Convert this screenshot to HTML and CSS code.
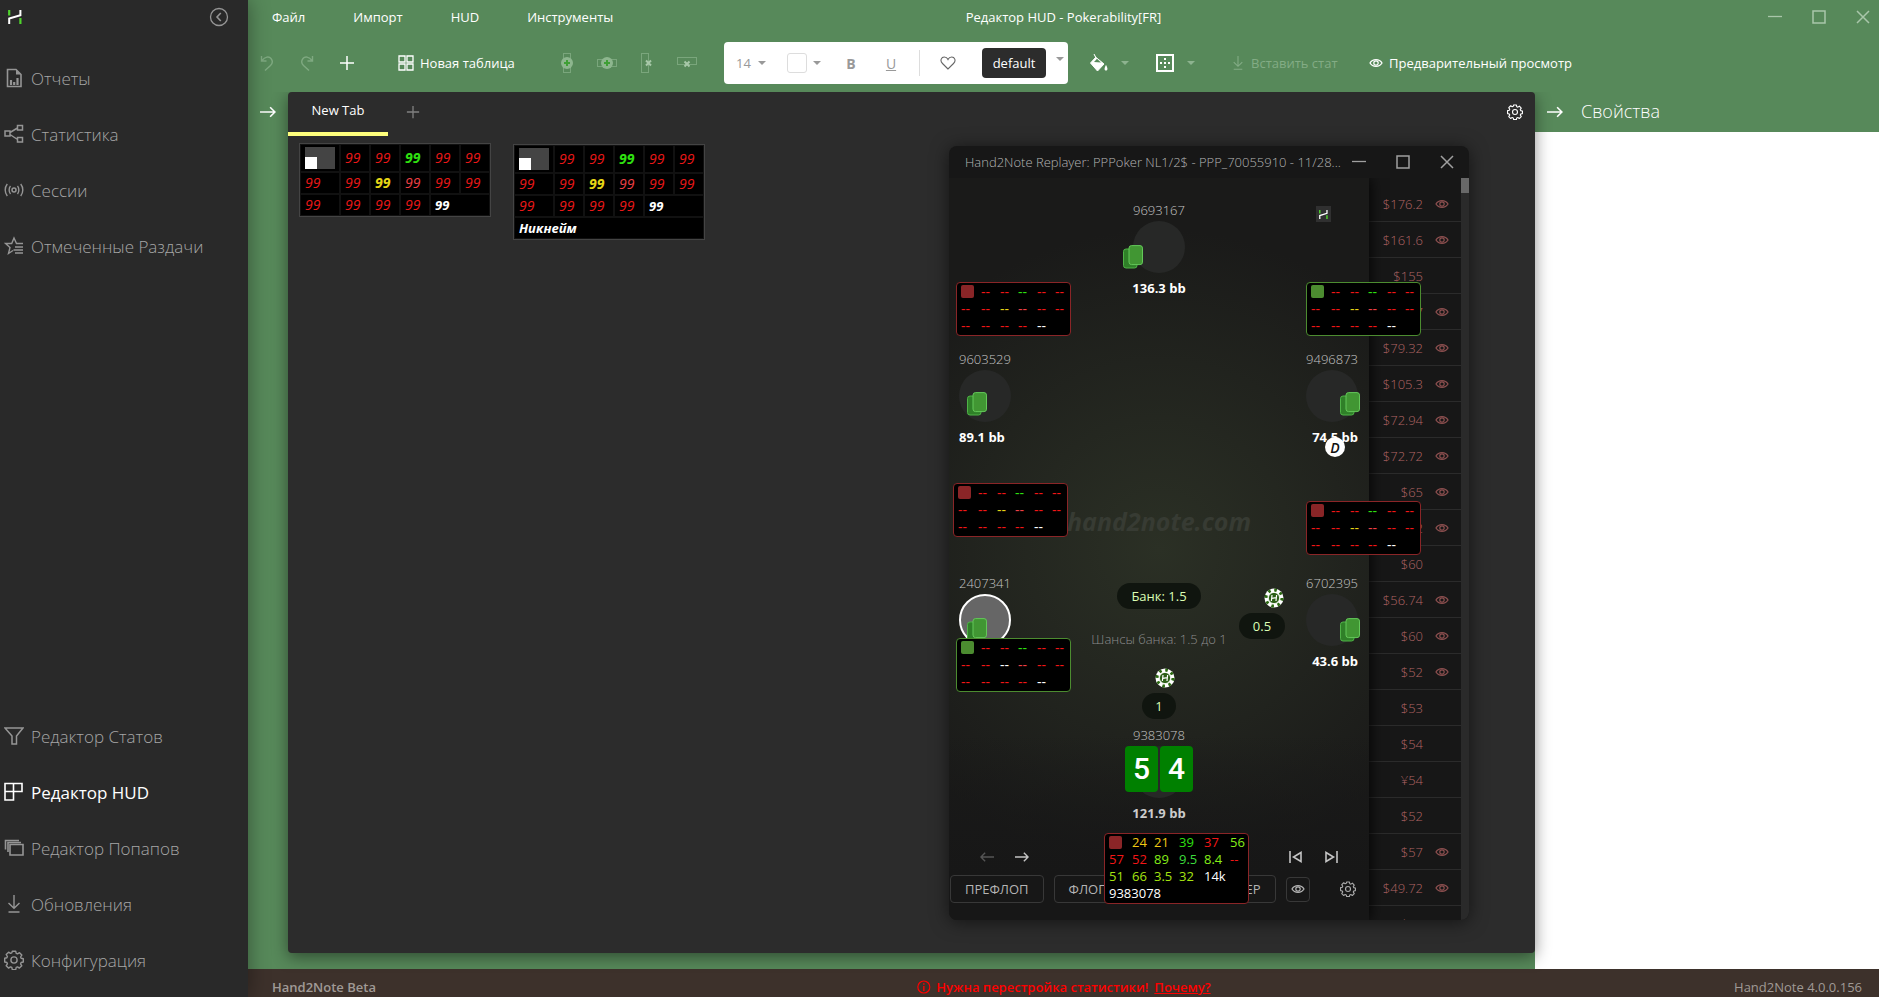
FILE: index.html
```html
<!DOCTYPE html>
<html lang="ru">
<head>
<meta charset="utf-8">
<title>Редактор HUD - Pokerability[FR]</title>
<link rel="stylesheet" href="styles.css">
</head>
<body>
<svg class="defs" aria-hidden="true">
  <symbol id="logo" viewBox="0 0 14 14"><path d="M1.2 14V8.6L12.4 5.2V0" fill="none" stroke="#fff" stroke-width="2"/><path d="M1.2 0V5.6M12.4 8V14" stroke="#4fd42c" stroke-width="2.2"/></symbol>
  <symbol id="eye" viewBox="0 0 14 10"><path d="M1 5C3.600 .6 10.400 .6 13 5C10.400 9.400 3.600 9.400 1 5Z" fill="none" stroke="currentColor" stroke-width="1.300"/><circle cx="7" cy="5" r="2.200" fill="none" stroke="currentColor" stroke-width="1.200"/></symbol>
  <symbol id="gear" viewBox="0 0 20 20"><path d="M8.300 1.200h3.400l.5 2.200 1.300.5 2-1.200 2.300 2.400-1.200 1.900.5 1.300 2.200.5v3.200l-2.200.5-.5 1.300 1.200 2-2.400 2.300-1.900-1.200-1.300.5-.5 2.200H8.300l-.5-2.200-1.300-.5-2 1.200-2.300-2.400 1.200-1.900-.5-1.300-2.200-.5V8.300l2.200-.5.5-1.300-1.200-2 2.400-2.300 1.900 1.200 1.300-.5Z" fill="none" stroke="currentColor" stroke-width="1.400" stroke-linejoin="round"/><circle cx="10" cy="10" r="3.100" fill="none" stroke="currentColor" stroke-width="1.400"/></symbol>
  <symbol id="arrow" viewBox="0 0 15 12"><path d="M0 6H14M9.500 1.500L14 6L9.500 10.500" fill="none" stroke="currentColor" stroke-width="1.500"/></symbol>
  <symbol id="download" viewBox="0 0 14 18"><path d="M7 0V13M1.500 8L7 13.300L12.500 8M1.500 17H12.500" fill="none" stroke="currentColor" stroke-width="1.400"/></symbol>
  <symbol id="caret" viewBox="0 0 8 4"><path d="M0 0H8L4 4Z" fill="currentColor"/></symbol>
  <symbol id="plus" viewBox="0 0 16 16"><path d="M8 1V15M1 8H15" stroke="currentColor" stroke-width="1.500"/></symbol>
  <symbol id="undo" viewBox="0 0 14 16"><path d="M1.500 1V6H6.500M2 5.500C5 1.500 9 1 11 3.500C13 6 12.500 8.500 10.500 10.500L5 15.500" fill="none" stroke="currentColor" stroke-width="1.400"/></symbol>
  <symbol id="min" viewBox="0 0 14 14"><path d="M0 6.500H14" stroke="currentColor" stroke-width="1.300"/></symbol>
  <symbol id="max" viewBox="0 0 14 14"><path d="M1 1H13V13H1Z" fill="none" stroke="currentColor" stroke-width="1.500"/></symbol>
  <symbol id="close" viewBox="0 0 14 14"><path d="M1 1L13 13M13 1L1 13" stroke="currentColor" stroke-width="1.500"/></symbol>
  <symbol id="backs" viewBox="0 0 20 24"><rect x=".5" y="4" width="13.500" height="19" rx="2.500" fill="#2f8028" stroke="#4fb247"/><rect x="6" y=".6" width="13.500" height="19" rx="2.500" fill="#419633" stroke="#64c85a"/></symbol>
  <symbol id="chip" viewBox="0 0 20 20"><circle cx="10" cy="10" r="9.500" fill="#fff"/><circle cx="10" cy="10" r="8" fill="none" stroke="#2c6a12" stroke-width="3" stroke-dasharray="2.600 3.680"/><circle cx="10" cy="10" r="5.600" fill="#2c5f17" stroke="#fff" stroke-width=".8"/><path d="M8 7L7.400 13M12.600 7L12 13M7.800 10.400L12.400 9.600" stroke="#fff" stroke-width="1.200"/></symbol>
  <symbol id="skip" viewBox="0 0 14 14"><path d="M1 1V13M12 2.500V11.500L4.500 7Z" fill="none" stroke="currentColor" stroke-width="1.600"/></symbol>
</svg>
<div class="app">
  <aside class="sidebar">
    <header class="brand">
      <svg class="i14"><use href="#logo"/></svg>
      <button class="icon-btn collapse" aria-label="Свернуть"><svg class="i20" viewBox="0 0 20 20"><circle cx="10" cy="10" r="8.500" fill="none" stroke="currentColor" stroke-width="1.300"/><path d="M11.800 6L8 10L11.800 14" fill="none" stroke="currentColor" stroke-width="1.600"/></svg></button>
    </header>
    <nav class="nav">
      <a href="#"><svg class="i20" viewBox="0 0 20 20"><path d="M3.500 1.500H12L17 6.500V18.500H3.500Z" fill="none" stroke="currentColor" stroke-width="1.600"/><path d="M12 1.500V6.500H17Z" fill="currentColor"/><path d="M7 17V12M10.200 17V14M13.500 17V10" stroke="currentColor" stroke-width="2.200"/></svg><span>Отчеты</span></a>
      <a href="#"><svg class="i20" viewBox="0 0 20 20"><path d="M1 7H6V12H1ZM13.500 1.500H18.500V6H13.500ZM13.500 13.500H18.500V18H13.500ZM6 8.500L13.500 4M6 10.500L13.500 15.500" fill="none" stroke="currentColor" stroke-width="1.500"/></svg><span>Статистика</span></a>
      <a href="#"><svg class="i20" viewBox="0 0 20 20"><circle cx="10" cy="10" r="2" fill="none" stroke="currentColor" stroke-width="1.500"/><path d="M6.500 6C4.700 8 4.700 12 6.500 14M3.300 4C.5 7.500 .5 12.500 3.300 16M13.500 6C15.300 8 15.300 12 13.500 14M16.700 4C19.500 7.500 19.500 12.500 16.700 16" fill="none" stroke="currentColor" stroke-width="1.400"/></svg><span>Сессии</span></a>
      <a href="#"><svg class="i20" viewBox="0 0 20 20"><path d="M19 7.500H12.500L10 2L7.700 7.500H1.500L6 11.500L4.500 17.500L9 14.500M11 11H19M9.500 14H19M11 17H19" fill="none" stroke="currentColor" stroke-width="1.400"/></svg><span>Отмеченные Раздачи</span></a>
    </nav>
    <nav class="nav nav-bottom">
      <a href="#"><svg class="i20" viewBox="0 0 20 20"><path d="M1 2H19L12.500 10V18H8V10Z" fill="none" stroke="currentColor" stroke-width="1.500"/></svg><span>Редактор Статов</span></a>
      <a href="#" class="active" aria-current="page"><svg class="i20" viewBox="0 0 20 20"><path d="M1 1.500H18V9.500H1ZM9.500 1.500V18H1V9.500" fill="none" stroke="currentColor" stroke-width="1.600"/></svg><span>Редактор HUD</span></a>
      <a href="#"><svg class="i20" viewBox="0 0 20 20"><path d="M6 6.500H19V17H6ZM4 14V4.500H17M1.500 11.500V2.500H15" fill="none" stroke="currentColor" stroke-width="1.600"/></svg><span>Редактор Попапов</span></a>
      <a href="#"><svg class="i20" viewBox="-3 -1 20 20"><use href="#download" width="14" height="18"/></svg><span>Обновления</span></a>
      <a href="#"><svg class="i20"><use href="#gear"/></svg><span>Конфигурация</span></a>
    </nav>
  </aside>
  <main class="main">
    <header class="titlebar">
      <nav class="menu"><button>Файл</button><button>Импорт</button><button>HUD</button><button>Инструменты</button></nav>
      <h1 class="title">Редактор HUD - Pokerability[FR]</h1>
      <div class="win-ctl">
        <button class="icon-btn" aria-label="Свернуть окно"><svg class="i14"><use href="#min"/></svg></button>
        <button class="icon-btn" aria-label="Развернуть"><svg class="i14"><use href="#max"/></svg></button>
        <button class="icon-btn" aria-label="Закрыть"><svg class="i14"><use href="#close"/></svg></button>
      </div>
    </header>
    <div class="toolbar">
      <div class="history">
        <button class="icon-btn dim" aria-label="Отменить"><svg class="i16"><use href="#undo"/></svg></button>
        <button class="icon-btn dim flip" aria-label="Повторить"><svg class="i16"><use href="#undo"/></svg></button>
        <button class="icon-btn" aria-label="Добавить"><svg class="i16"><use href="#plus"/></svg></button>
      </div>
      <button class="tool new-table"><svg class="i16" viewBox="0 0 16 16"><path d="M1 1H7V7H1ZM9 1H15V7H9ZM1 9H7V15H1ZM9 9H15V15H9Z" fill="none" stroke="currentColor" stroke-width="1.300"/></svg>Новая таблица</button>
      <div class="cells">
        <button class="icon-btn" aria-label="Добавить столбец"><svg class="i20" viewBox="0 0 20 20"><rect x="6.500" y=".5" width="7" height="19" fill="none" stroke="#7aa67c"/><circle cx="10" cy="10" r="6" fill="#8db68e"/><path d="M10 7V13M7 10H13" stroke="#3f9f35" stroke-width="2"/></svg></button>
        <button class="icon-btn" aria-label="Добавить строку"><svg class="i20" viewBox="0 0 20 20"><rect x=".5" y="6.500" width="19" height="7" fill="none" stroke="#7aa67c"/><circle cx="10" cy="10" r="6" fill="#8db68e"/><path d="M10 7V13M7 10H13" stroke="#3f9f35" stroke-width="2"/></svg></button>
        <button class="icon-btn" aria-label="Удалить столбец"><svg class="i20" viewBox="0 0 20 20"><rect x="4.500" y=".5" width="7" height="19" fill="none" stroke="#7aa67c"/><path d="M9 7.500L14 12.500M14 7.500L9 12.500" stroke="#a8c8a9" stroke-width="2"/></svg></button>
        <button class="icon-btn" aria-label="Удалить строку"><svg class="i20" viewBox="0 0 20 20"><rect x=".5" y="4.500" width="19" height="7" fill="none" stroke="#7aa67c"/><path d="M7.500 8.500L12.500 13.500M12.500 8.500L7.500 13.500" stroke="#a8c8a9" stroke-width="2"/></svg></button>
      </div>
      <div class="format">
        <div class="pick"><select aria-label="Размер шрифта"><option>14</option></select><svg class="caret"><use href="#caret"/></svg></div>
        <button class="swatch" aria-label="Цвет текста"><span></span><svg class="caret"><use href="#caret"/></svg></button>
        <button class="fmt b">B</button>
        <button class="fmt u">U</button>
        <i class="rule"></i>
        <button class="icon-btn heart" aria-label="Избранное"><svg class="i16" viewBox="0 0 16 16"><path d="M8 14L2.500 8.500C-.5 5.500 1.500 2 4.300 2C6 2 7.300 3 8 4.500C8.700 3 10 2 11.700 2C14.500 2 16.500 5.500 13.500 8.500Z" fill="none" stroke="currentColor" stroke-width="1.100"/></svg></button>
        <button class="default">default</button>
        <button class="icon-btn more" aria-label="Стили"><svg class="caret"><use href="#caret"/></svg></button>
      </div>
      <button class="icon-btn drop" aria-label="Заливка"><svg class="i20" viewBox="0 0 20 20"><path d="M5 1L6.500 4L15 11L8.500 18L1.500 10L7 4" fill="currentColor" stroke="currentColor"/><path d="M5 9L8 5.800L12 9.500Z" fill="#57895a"/><path d="M17 12C15.200 15 15 17.500 17 17.500S18.800 15 17 12Z" fill="currentColor"/></svg><svg class="caret"><use href="#caret"/></svg></button>
      <button class="icon-btn drop borders" aria-label="Границы"><svg class="i20" viewBox="0 0 20 20"><rect x="2" y="2" width="16" height="16" fill="none" stroke="currentColor" stroke-width="2"/><path d="M10 5V15M5 10H15" stroke="currentColor" stroke-width="2" stroke-dasharray="2 2"/></svg><svg class="caret"><use href="#caret"/></svg></button>
      <button class="tool insert" disabled><svg class="i14"><use href="#download"/></svg>Вставить стат</button>
      <button class="tool preview"><svg class="i14"><use href="#eye"/></svg>Предварительный просмотр</button>
    </div>
    <div class="work">
      <button class="icon-btn gutter" aria-label="Показать панель"><svg class="i15"><use href="#arrow"/></svg></button>
      <section class="panel">
        <div class="tabs">
          <button class="tab">New Tab</button>
          <button class="icon-btn add-tab" aria-label="Новая вкладка"><svg class="i14"><use href="#plus"/></svg></button>
          <button class="icon-btn settings" aria-label="Настройки"><svg class="i16"><use href="#gear"/></svg></button>
        </div>
        <div class="canvas">
          <table class="hud-edit first">
            <tr class="tall"><td class="wide"><span class="note"></span></td><td>99</td><td>99</td><td class="g">99</td><td>99</td><td>99</td></tr>
            <tr><td>99</td><td>99</td><td class="y">99</td><td class="p">99</td><td>99</td><td>99</td></tr>
            <tr><td>99</td><td>99</td><td>99</td><td>99</td><td colspan="2" class="w">99</td></tr>
          </table>
          <table class="hud-edit second">
            <tr class="tall"><td class="wide"><span class="note"></span></td><td>99</td><td>99</td><td class="g">99</td><td>99</td><td>99</td></tr>
            <tr><td>99</td><td>99</td><td class="y">99</td><td class="p">99</td><td>99</td><td>99</td></tr>
            <tr><td>99</td><td>99</td><td>99</td><td>99</td><td colspan="2" class="w">99</td></tr>
            <tr><td colspan="6" class="w">Никнейм</td></tr>
          </table>
          <section class="replayer">
            <header class="rep-title">
              <h2>Hand2Note Replayer: PPPoker NL1/2$ - PPP_70055910 - 11/28...</h2>
              <button class="icon-btn" aria-label="Свернуть"><svg class="i14"><use href="#min"/></svg></button>
              <button class="icon-btn" aria-label="Развернуть"><svg class="i14"><use href="#max"/></svg></button>
              <button class="icon-btn" aria-label="Закрыть"><svg class="i14"><use href="#close"/></svg></button>
            </header>
            <div class="rep-body">
              <div class="felt">
                <span class="badge"><svg><use href="#logo"/></svg></span>
                <b class="mark">hand2note.com</b>
                <div class="seat s1"><span>9693167</span><i></i><b>136.3 bb</b><svg class="backs"><use href="#backs"/></svg></div>
                <div class="seat s2"><span>9603529</span><i></i><b>89.1 bb</b><svg class="backs"><use href="#backs"/></svg></div>
                <div class="seat s3"><span>9496873</span><i></i><b>74.5 bb</b><svg class="backs"><use href="#backs"/></svg></div>
                <div class="seat s4 turn"><span>2407341</span><i></i><svg class="backs"><use href="#backs"/></svg></div>
                <div class="seat s5"><span>6702395</span><i></i><b>43.6 bb</b><svg class="backs"><use href="#backs"/></svg></div>
                <div class="seat s6"><span>9383078</span><i></i><b>121.9 bb</b><div class="cards"><em>5</em><em>4</em></div></div>
                <span class="dealer">D</span>
                <span class="pill bank">Банк: 1.5</span>
                <span class="odds">Шансы банка: 1.5 до 1</span>
                <svg class="chip c1"><use href="#chip"/></svg><span class="pill bet1">0.5</span>
                <svg class="chip c2"><use href="#chip"/></svg><span class="pill bet2">1</span>
                <footer class="controls">
                  <div class="steps">
                    <button class="icon-btn faint" aria-label="Назад"><svg class="i14"><use href="#arrow"/></svg></button>
                    <button class="icon-btn" aria-label="Вперёд"><svg class="i14"><use href="#arrow"/></svg></button>
                    <button class="icon-btn prev" aria-label="Предыдущая раздача"><svg class="i14"><use href="#skip"/></svg></button>
                    <button class="icon-btn flip" aria-label="Следующая раздача"><svg class="i14"><use href="#skip"/></svg></button>
                  </div>
                  <div class="streets">
                    <button>ПРЕФЛОП</button><button>ФЛОП</button><button>ТЕРН</button><button>РИВЕР</button>
                    <button class="look" aria-label="Показать карты"><svg class="i14"><use href="#eye"/></svg></button>
                    <button class="icon-btn cfg" aria-label="Настройки"><svg class="i16"><use href="#gear"/></svg></button>
                  </div>
                </footer>
              </div>
              <ul class="hands">
                <li>$176.2<svg><use href="#eye"/></svg></li><li>$161.6<svg><use href="#eye"/></svg></li><li>$155</li><li>$83.67<svg><use href="#eye"/></svg></li><li>$79.32<svg><use href="#eye"/></svg></li><li>$105.3<svg><use href="#eye"/></svg></li><li>$72.94<svg><use href="#eye"/></svg></li><li>$72.72<svg><use href="#eye"/></svg></li><li>$65<svg><use href="#eye"/></svg></li><li>$62.2<svg><use href="#eye"/></svg></li><li>$60</li><li>$56.74<svg><use href="#eye"/></svg></li><li>$60<svg><use href="#eye"/></svg></li><li>$52<svg><use href="#eye"/></svg></li><li>$53</li><li>$54</li><li>¥54</li><li>$52</li><li>$57<svg><use href="#eye"/></svg></li><li>$49.72<svg><use href="#eye"/></svg></li><li>$48</li>
              </ul>
              <div class="scroll"><i></i></div>
            </div>
            <div class="hud h1"><i></i><span>--</span><span>--</span><span class="g">--</span><span>--</span><span>--</span><span>--</span><span>--</span><span class="y">--</span><span class="p">--</span><span>--</span><span>--</span><span>--</span><span>--</span><span>--</span><span>--</span><span class="w">--</span></div>
            <div class="hud h2 green"><i></i><span>--</span><span>--</span><span class="g">--</span><span>--</span><span>--</span><span>--</span><span>--</span><span class="y">--</span><span class="p">--</span><span>--</span><span>--</span><span>--</span><span>--</span><span>--</span><span>--</span><span class="w">--</span></div>
            <div class="hud h3"><i></i><span>--</span><span>--</span><span class="g">--</span><span>--</span><span>--</span><span>--</span><span>--</span><span class="y">--</span><span class="p">--</span><span>--</span><span>--</span><span>--</span><span>--</span><span>--</span><span>--</span><span class="w">--</span></div>
            <div class="hud h4"><i></i><span>--</span><span>--</span><span class="g">--</span><span>--</span><span>--</span><span>--</span><span>--</span><span class="y">--</span><span class="p">--</span><span>--</span><span>--</span><span>--</span><span>--</span><span>--</span><span>--</span><span class="w">--</span></div>
            <div class="hud h5 green"><i></i><span>--</span><span>--</span><span class="g">--</span><span>--</span><span>--</span><span>--</span><span>--</span><span class="w">--</span><span class="p">--</span><span>--</span><span>--</span><span>--</span><span>--</span><span>--</span><span>--</span><span class="w">--</span></div>
            <div class="hud h6"><i></i><span class="o">24</span><span class="o">21</span><span class="g">39</span><span>37</span><span class="l">56</span><span>57</span><span>52</span><span class="l">89</span><span class="m">9.5</span><span class="l">8.4</span><span>--</span><span class="l2">51</span><span class="l2">66</span><span class="l2">3.5</span><span class="l2">32</span><span class="w">14k</span><span class="nick">9383078</span></div>
          </section>
        </div>
      </section>
      <aside class="props">
        <header><button class="icon-btn" aria-label="Скрыть панель"><svg class="i15"><use href="#arrow"/></svg></button><h2>Свойства</h2></header>
        <div class="props-body"></div>
      </aside>
    </div>
    <footer class="status">
      <span class="beta">Hand2Note Beta</span>
      <span class="alert"><svg class="i14" viewBox="0 0 14 14"><circle cx="7" cy="7" r="6" fill="none" stroke="currentColor" stroke-width="1.200"/><path d="M7 3.200V4.800M7 6V11" stroke="currentColor" stroke-width="1.400"/></svg>Нужна перестройка статистики! <a href="#">Почему?</a></span>
      <span class="version">Hand2Note 4.0.0.156</span>
    </footer>
  </main>
</div>
</body>
</html>
```
FILE: styles.css
```css
* { box-sizing: border-box; }
body { margin: 0; font-family: "Open Sans", "Noto Sans", sans-serif; font-size: 13px; color: #fff; }
button, select { font: inherit; color: inherit; background: none; border: 0; padding: 0; margin: 0; }
h1, h2 { margin: 0; font-weight: 400; }
svg { display: block; flex: none; }
.defs { position: absolute; width: 0; height: 0; }
.i14 { width: 14px; height: 14px; }
.i15 { width: 16px; height: 14px; }
.i16 { width: 16px; height: 16px; }
.i20 { width: 20px; height: 20px; }
.caret { width: 8px; height: 4px; }
.icon-btn { display: flex; align-items: center; justify-content: center; }
.flip { transform: scaleX(-1); }

.app { display: flex; height: 100vh; overflow: hidden; }
.sidebar { flex: 0 0 248px; display: flex; flex-direction: column; background: #292929; color: #959595; padding-bottom: 9px; position: relative; z-index: 2; box-shadow: 0 0 20px rgba(0, 0, 0, .4); }
.brand { display: flex; align-items: center; justify-content: space-between; height: 34px; padding: 0 19px 0 8px; margin-bottom: 16px; }
.nav a { display: flex; align-items: center; gap: 7px; height: 56px; padding-left: 4px; font-size: 17px; font-weight: 300; color: inherit; text-decoration: none; white-space: nowrap; }
.nav span { color: #a6a6a6; }
.nav .active, .nav .active span { color: #fff; font-weight: 400; }
.nav-bottom { margin-top: auto; }

.main { flex: 1; min-width: 0; display: flex; flex-direction: column; background: #57895a; }
.titlebar { position: relative; flex: none; display: flex; align-items: center; justify-content: space-between; height: 34px; padding: 0 9px 0 24px; font-weight: 500; }
.menu { display: flex; gap: 48px; }
.title { position: absolute; left: 50%; transform: translateX(-50%); font-size: 13px; font-weight: 500; white-space: nowrap; line-height: 34px; }
.win-ctl { display: flex; gap: 30px; color: #a9c6aa; }

.toolbar { flex: none; display: flex; align-items: center; height: 58px; padding-left: 11px; font-weight: 600; white-space: nowrap; }
.history { display: flex; gap: 24px; }
.dim { color: #7fa981; }
.tool { display: flex; align-items: center; gap: 6px; }
.new-table { margin-left: 43px; width: 118px; font-weight: 500; }
.cells { display: flex; gap: 20px; margin-left: 41px; }
.format { display: flex; align-items: center; height: 42px; width: 344px; margin-left: 27px; padding: 0 4px 0 12px; background: #fff; border-radius: 4px; color: #999; }
.pick { display: flex; align-items: center; gap: 6px; font-weight: 400; }
.pick select { appearance: none; width: 16px; font-size: 13px; }
.swatch { display: flex; align-items: center; gap: 6px; margin-left: 21px; }
.swatch span { width: 20px; height: 20px; border: 1px solid #ddd; border-radius: 3px; }
.fmt { width: 16px; margin-left: 22px; font-size: 14px; }
.b { font-weight: 700; }
.u { margin-left: 24px; font-weight: 400; text-decoration: underline; }
.rule { width: 1px; height: 26px; margin-left: 20px; background: #ddd; }
.heart { margin-left: 20px; color: #666; }
.default { width: 64px; height: 30px; margin-left: 26px; border-radius: 4px; background: #2c2c2c; color: #fff; font-weight: 400; }
.more { margin: 0 0 8px 10px; }
.drop { gap: 12px; margin-left: 21px; }
.drop .caret { color: #8db38f; }
.borders { margin-left: 26px; }
.insert { width: 106px; margin-left: 36px; color: #83ac85; font-weight: 400; }
.preview { margin-left: 32px; font-weight: 500; }

.work { flex: 1; min-height: 0; display: flex; }
.gutter { flex: none; width: 40px; height: 40px; }
.panel { flex: 1; min-width: 0; display: flex; flex-direction: column; margin-bottom: 16px; background: #2c2c2c; border-radius: 4px; position: relative; z-index: 1; box-shadow: 0 4px 16px rgba(0, 0, 0, .45); clip-path: inset(0 -20px -20px -20px); }
.tabs { display: flex; height: 44px; }
.tab { width: 100px; padding: 0 15px 4px; border-bottom: 4px solid #ffff7c; font-weight: 500; }
.add-tab { margin-left: 18px; height: 40px; color: #808080; }
.settings { margin-left: auto; margin-right: 12px; height: 40px; }
.canvas { position: relative; flex: 1; }

.hud-edit { position: absolute; left: 11px; top: 7px; width: 192px; table-layout: fixed; border: 1px solid #444; border-spacing: 0; background: #0e0e0e; color: #ec1818; font-size: 14px; font-style: italic; }
.hud-edit td { height: 22px; padding: 0 0 0 4px; border: 1px solid #111; background: #000; line-height: 18px; white-space: nowrap; }
.hud-edit .tall td { height: 28px; }
.hud-edit .wide { width: 40px; }
.hud-edit.second { left: 225px; top: 8px; }
.note { display: block; width: 30px; height: 22px; background: linear-gradient(#fff, #fff) 0 100% / 12px 12px no-repeat #444; }
.hud-edit .g { color: #2fe010; font-weight: 700; }
.hud-edit .y { color: #e6d516; font-weight: 700; }
.hud-edit .p { color: #f04046; }
.hud-edit .w { color: #fff; font-weight: 700; font-size: 13px; }

.replayer { position: absolute; right: 66px; top: 10px; width: 520px; height: 774px; display: flex; flex-direction: column; border-radius: 8px; background: #171717; box-shadow: 0 2px 18px rgba(0, 0, 0, .55); }
.rep-title { flex: none; display: flex; align-items: center; gap: 30px; height: 32px; padding: 0 15px 0 16px; color: #a0a0a0; }
.rep-title h2 { flex: 1; min-width: 0; margin-right: -15px; font-size: 13px; font-weight: 300; color: #b4b4b4; white-space: nowrap; }
.rep-body { flex: 1; min-height: 0; display: flex; overflow: hidden; border-radius: 0 0 8px 8px; }
.felt { position: relative; flex: 1; display: flex; flex-direction: column; justify-content: flex-end; background: linear-gradient(transparent 75%, #171717 94%), radial-gradient(circle at 50% 50%, #2b3025, #1a1a19 320px); box-shadow: 0 0 14px #000; z-index: 1; }
.badge { position: absolute; left: 367px; top: 28px; width: 15px; height: 16px; padding: 4px 3px; background: #303030; }
.badge svg { width: 9px; height: 9px; }
.mark { position: absolute; left: 50%; top: 326px; transform: translateX(-50%); font-size: 25px; line-height: 34px; font-style: italic; color: #373b33; }
.seat { position: absolute; display: flex; flex-direction: column; width: 52px; font-size: 13px; line-height: 18px; color: #c4c4c4; font-weight: 300; white-space: nowrap; }
.seat i { width: 52px; height: 52px; margin: 2px 0 6px; border-radius: 50%; background: #272827; }
.seat b { color: #fff; font-weight: 700; font-size: 13px; }
.seat.turn i { background: #666; border: 2px solid #fff; }
.backs { position: absolute; left: 8px; top: 42px; width: 20px; height: 24px; }
.s1 { left: 184px; top: 23px; align-items: center; }
.s1 .backs { left: -10px; top: 44px; }
.s2 { left: 10px; top: 172px; }
.s3 { right: 11px; top: 172px; align-items: flex-end; }
.s3 .backs, .s5 .backs { left: 34px; }
.s4 { left: 10px; top: 396px; }
.s4 .backs, .s5 .backs { top: 44px; }
.s5 { right: 11px; top: 396px; align-items: flex-end; }
.s6 { left: 184px; top: 548px; align-items: center; }
.seat.s6 b { color: #ccc; }
.cards { position: absolute; top: 20px; display: flex; gap: 2px; }
.cards em { width: 33px; height: 46px; border-radius: 4px; background: #008000; color: #fff; font: 500 30px/46px Roboto, "Open Sans", sans-serif; text-align: center; }
.dealer { position: absolute; left: 376px; top: 259px; width: 20px; height: 20px; border-radius: 50%; background: #fff; color: #111; font-size: 14px; font-style: italic; font-weight: 600; line-height: 21px; text-align: center; }
.pill { position: absolute; height: 26px; border-radius: 13px; background: #10150f; color: #dcffb4; line-height: 26px; text-align: center; }
.bank { left: 168px; top: 405px; width: 84px; }
.bet1 { left: 290px; top: 435px; width: 46px; }
.bet2 { left: 193px; top: 515px; width: 34px; }
.odds { position: absolute; left: 50%; top: 452px; transform: translateX(-50%); line-height: 18px; color: #8c8c8c; font-weight: 300; white-space: nowrap; }
.chip { position: absolute; width: 20px; height: 20px; }
.c1 { left: 315px; top: 410px; }
.c2 { left: 206px; top: 490px; }
.controls { color: #c4c4c4; padding-bottom: 17px; }
.steps { display: flex; gap: 21px; padding: 0 31px; margin-bottom: 11px; }
.faint { color: #555; transform: scaleX(-1); }
.steps .prev { margin-left: auto; }
.streets { display: flex; align-items: center; height: 28px; padding-left: 1px; gap: 10px; }
.streets button:not(.icon-btn) { height: 28px; padding: 0 14px; border: 1px solid #383838; border-radius: 4px; color: #b4b4b4; font-size: 13px; font-weight: 500; }
.streets button.look { height: 25px; padding: 0 4px; }
.streets .cfg { margin-left: 20px; color: #aaa; }

.hands { flex: none; width: 92px; margin: 0; padding: 8px 0 0; list-style: none; color: #b06464; font-size: 13px; font-weight: 300; background: #171717; }
.hands li { position: relative; height: 36px; padding-right: 38px; border-bottom: 1px solid #2b2b2b; line-height: 36px; text-align: right; }
.hands svg { position: absolute; right: 12px; top: 13px; width: 14px; height: 10px; color: #8c4f4f; }
.scroll { flex: none; width: 8px; background: #2a2a2a; }
.scroll i { display: block; height: 15px; background: #686868; }

.hud { position: absolute; z-index: 2; display: grid; grid-template-columns: 20px 19px 18px 19px 18px 1fr; grid-auto-rows: 17px; width: 115px; height: 54px; padding: 0 0 0 4px; border: 1px solid #8a2527; border-radius: 4px; background: #000; color: #f41616; font-size: 14px; line-height: 17px; white-space: nowrap; }
.hud i { width: 13px; height: 13px; margin-top: 2px; border-radius: 2px; background: #8a2527; }
.hud.green { border-color: #4c8c30; }
.hud.green i { background: #4c8c30; }
.hud .g { color: #2fe010; }
.hud .y { color: #e6d516; }
.hud .p { color: #f04046; }
.hud .w { color: #fff; }
.hud .o { color: #f0c814; }
.hud .l { color: #86ee18; }
.hud .l2 { color: #a6e410; }
.hud .m { color: #3cdc3c; }
.h1 { left: 7px; top: 136px; }
.h2 { left: 357px; top: 136px; }
.h3 { left: 4px; top: 337px; }
.h4 { left: 357px; top: 355px; }
.h5 { left: 7px; top: 492px; }
.h6 { left: 155px; top: 687px; width: 145px; height: 71px; font-size: 13px; grid-template-columns: 23px 22px 25px 25px 26px 1fr; }
.hud .nick { grid-column: 1 / -1; grid-row: 4; color: #fff; }

.props { flex: none; width: 344px; display: flex; flex-direction: column; }
.props header { display: flex; align-items: center; gap: 18px; height: 40px; padding-left: 12px; }
.props h2 { font-size: 18px; line-height: 24px; padding-bottom: 2px; font-weight: 300; }
.props-body { flex: 1; background: #fff; }

.status { position: relative; flex: none; display: flex; align-items: center; justify-content: space-between; height: 28px; padding: 8px 17px 0 24px; background: #3d312b; color: #a09a96; white-space: nowrap; }
.beta { font-weight: 600; }
.alert { position: absolute; left: 50%; transform: translateX(-50%); display: flex; align-items: center; gap: 6px; color: #f00; font-weight: 600; }
.alert a { color: inherit; }
```
